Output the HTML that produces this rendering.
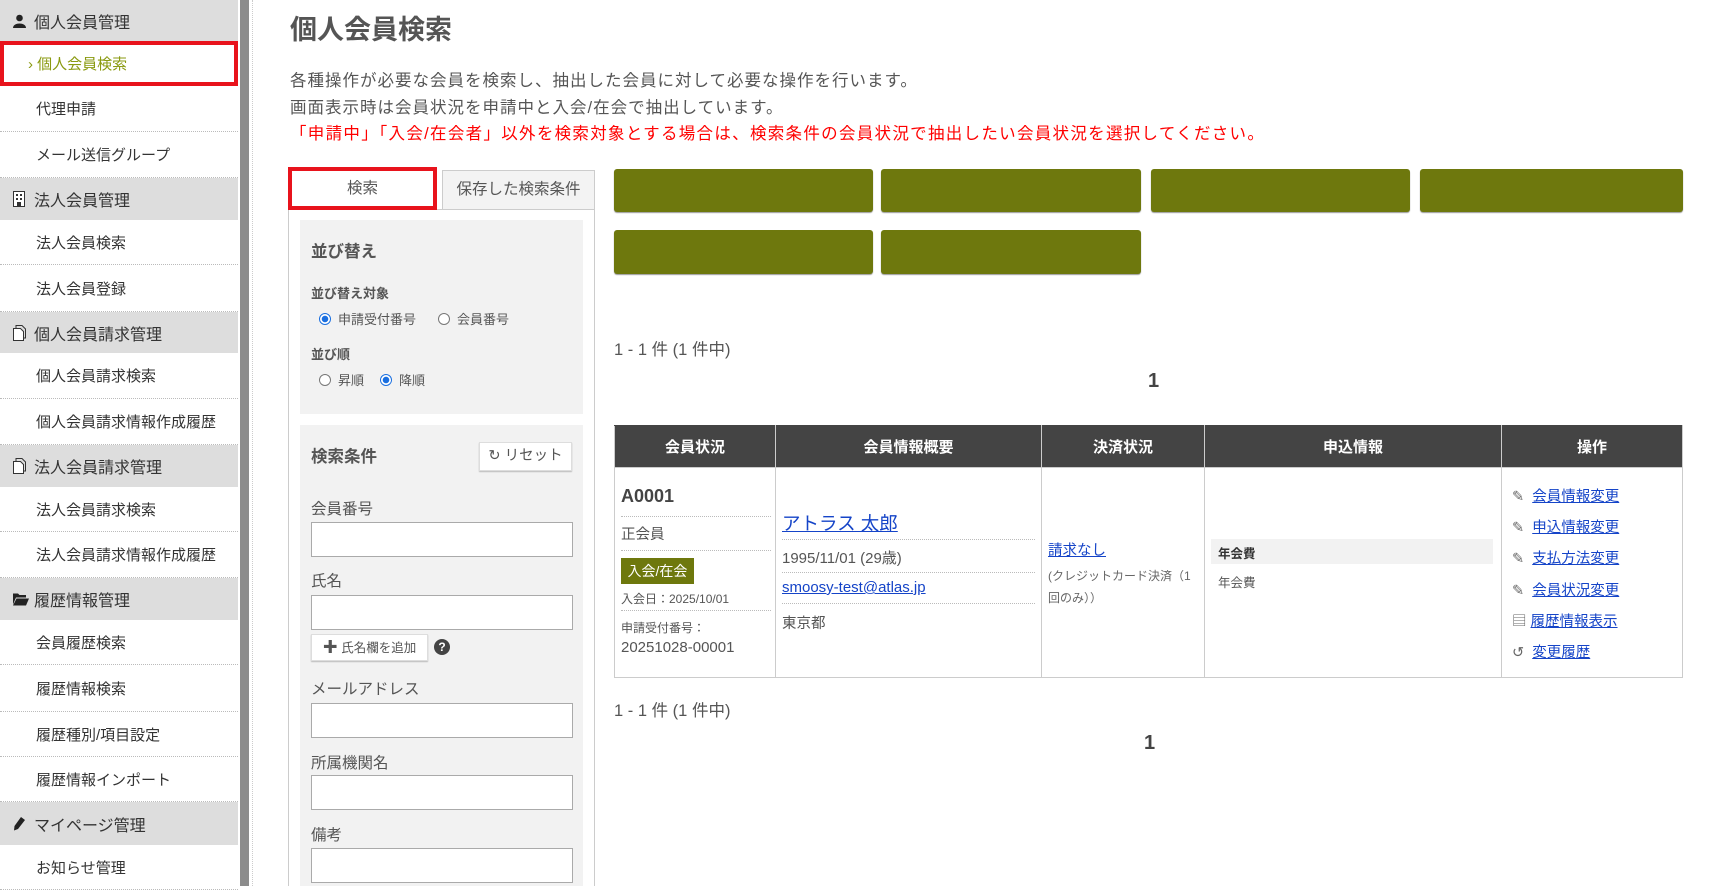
<!DOCTYPE html>
<html><head><meta charset="utf-8">
<style>
*{margin:0;padding:0;box-sizing:border-box}
body{width:1718px;height:886px;overflow:hidden;background:#fff;font-family:"Liberation Sans","Noto Sans CJK JP",sans-serif;color:#444;position:relative}
.a{position:absolute;white-space:nowrap}
.side{position:absolute;left:0;top:0;width:238px;height:886px;background:#fff}
.hd{position:absolute;left:0;width:238px;background:#ddd;font-size:16px;color:#333;padding-left:34px;display:flex;align-items:center}
.hd svg{position:absolute;left:13px;top:50%;transform:translateY(-50%)}
.it{position:absolute;left:0;width:238px;font-size:15px;color:#333;padding-left:36px;display:flex;align-items:center;border-bottom:1px dotted #bbb}
.bar{position:absolute;left:240px;top:0;width:9px;height:886px;background:#8c8c8c}
.dl{position:absolute;left:252px;top:0;height:886px;border-left:1px dotted #ccc}
.btn{position:absolute;background:#6e780d;border-radius:3px;box-shadow:0 1px 1px #999}
.inp{position:absolute;left:311px;width:262px;height:35px;border:1px solid #aaa;background:#fff}
.lbl{position:absolute;left:311px;font-size:15.5px;color:#555}
.rad{display:inline-block;width:12px;height:12px;border:1px solid #777;border-radius:50%;vertical-align:-1px;margin-right:7px;background:#fff}
.rad.on{border:1px solid #1a6fe0;background:radial-gradient(circle,#1a6fe0 3px,#fff 3.5px)}
table{position:absolute;left:614px;top:425px;width:1069px;border-collapse:collapse}
th{background:#444;color:#fff;font-size:15px;height:42px;border:1px solid #ccc;border-top:1px solid #444}
td{border:1px solid #ccc;height:210px}
.lk{color:#1544c8;text-decoration:underline}
.dt{border-bottom:1px dotted #bbb}
</style></head><body>
<div class="side">
<div class="hd" style="top:0;height:41px"><svg width="13" height="14" viewBox="0 0 13 14"><circle cx="6.5" cy="4" r="3.3" fill="#222"/><path d="M0 14 C0 8 13 8 13 14Z" fill="#222"/></svg>個人会員管理</div>
<div class="it" style="top:41px;height:45px;border:4px solid #e8131c;color:#8a9a10;padding-left:24px">› 個人会員検索</div>
<div class="it" style="top:86px;height:46px">代理申請</div>
<div class="it" style="top:132px;height:46px">メール送信グループ</div>
<div class="hd" style="top:178px;height:42px"><svg width="12" height="16" viewBox="0 0 12 16"><rect x="0.5" y="0.5" width="11" height="15" fill="#fff" stroke="#333"/><rect x="3" y="3" width="2" height="2" fill="#333"/><rect x="7" y="3" width="2" height="2" fill="#333"/><rect x="3" y="7" width="2" height="2" fill="#333"/><rect x="7" y="7" width="2" height="2" fill="#333"/><rect x="4" y="11" width="4" height="5" fill="#333"/></svg>法人会員管理</div>
<div class="it" style="top:220px;height:45px">法人会員検索</div>
<div class="it" style="top:265px;height:47px">法人会員登録</div>
<div class="hd" style="top:312px;height:41px"><svg width="13" height="16" viewBox="0 0 13 16"><path d="M0.5 3.5h7l3 3v9h-10z" fill="#fff" stroke="#333"/><path d="M3 3.5V0.5h6l3.5 3.5v9H10.5" fill="none" stroke="#333"/></svg>個人会員請求管理</div>
<div class="it" style="top:353px;height:46px">個人会員請求検索</div>
<div class="it" style="top:399px;height:46px">個人会員請求情報作成履歴</div>
<div class="hd" style="top:445px;height:42px"><svg width="13" height="16" viewBox="0 0 13 16"><path d="M0.5 3.5h7l3 3v9h-10z" fill="#fff" stroke="#333"/><path d="M3 3.5V0.5h6l3.5 3.5v9H10.5" fill="none" stroke="#333"/></svg>法人会員請求管理</div>
<div class="it" style="top:487px;height:45px">法人会員請求検索</div>
<div class="it" style="top:532px;height:46px">法人会員請求情報作成履歴</div>
<div class="hd" style="top:578px;height:42px"><svg width="16" height="13" viewBox="0 0 16 13"><path d="M0 1h5l1.5 1.5H13V5H3L0 12z" fill="#222"/><path d="M3.5 6H16l-3 7H0z" fill="#222"/></svg>履歴情報管理</div>
<div class="it" style="top:620px;height:45px">会員履歴検索</div>
<div class="it" style="top:665px;height:47px">履歴情報検索</div>
<div class="it" style="top:712px;height:45px">履歴種別/項目設定</div>
<div class="it" style="top:757px;height:45px">履歴情報インポート</div>
<div class="hd" style="top:802px;height:43px"><svg width="12" height="14" viewBox="0 0 12 14"><path d="M8 0l4 3-7 9-4 1.5L1.5 9z" fill="#222"/></svg>マイページ管理</div>
<div class="it" style="top:845px;height:45px">お知らせ管理</div>
</div>
<div class="bar"></div><div class="dl"></div>

<div class="a" style="left:290px;top:8px;font-size:27px;font-weight:bold;color:#555">個人会員検索</div>
<div class="a" style="left:290px;top:68px;font-size:16.5px;line-height:26.5px;color:#555;letter-spacing:1px">各種操作が必要な会員を検索し、抽出した会員に対して必要な操作を行います。<br>画面表示時は会員状況を申請中と入会/在会で抽出しています。<br><span style="color:#f00;letter-spacing:1.3px">「申請中」「入会/在会者」以外を検索対象とする場合は、検索条件の会員状況で抽出したい会員状況を選択してください。</span></div>

<div class="a" style="left:288px;top:209px;width:307px;height:677px;border:1px solid #ccc;border-bottom:none"></div>
<div class="a" style="left:442px;top:170px;width:153px;height:40px;border:1px solid #ccc;background:#f3f3f3;font-size:15.5px;color:#555;text-align:center;line-height:38px">保存した検索条件</div>
<div class="a" style="left:288px;top:167px;width:149px;height:43px;border:4px solid #e8131c;background:#fff;font-size:15.5px;color:#555;text-align:center;line-height:35px">検索</div>

<div class="a" style="left:300px;top:220px;width:283px;height:194px;background:#f2f2f2"></div>
<div class="a" style="left:311px;top:238px;font-size:16.5px;font-weight:bold;color:#555">並び替え</div>
<div class="a" style="left:311px;top:283px;font-size:13px;font-weight:bold;color:#555">並び替え対象</div>
<div class="a" style="left:319px;top:309px;font-size:13px;color:#555"><span class="rad on"></span>申請受付番号<span style="display:inline-block;width:22px"></span><span class="rad"></span>会員番号</div>
<div class="a" style="left:311px;top:344px;font-size:13px;font-weight:bold;color:#555">並び順</div>
<div class="a" style="left:319px;top:370px;font-size:13px;color:#555"><span class="rad"></span>昇順<span style="display:inline-block;width:16px"></span><span class="rad on"></span>降順</div>

<div class="a" style="left:300px;top:425px;width:283px;height:461px;background:#f2f2f2"></div>
<div class="a" style="left:311px;top:443px;font-size:16.5px;font-weight:bold;color:#555">検索条件</div>
<div class="a" style="left:479px;top:442px;width:93px;height:29px;background:#fff;border:1px solid #ddd;box-shadow:0 1px 1px #bbb;font-size:14.5px;color:#555;text-align:center;line-height:27px">↻ リセット</div>
<div class="lbl" style="top:497px">会員番号</div><div class="inp" style="top:522px"></div>
<div class="lbl" style="top:569px">氏名</div><div class="inp" style="top:595px"></div>
<div class="a" style="left:311px;top:634px;width:117px;height:27px;background:#fff;border:1px solid #ddd;box-shadow:0 1px 1px #bbb;font-size:12.5px;color:#555;text-align:center;line-height:25px"><b style="font-size:15px">✚</b> 氏名欄を追加</div>
<div class="a" style="left:434px;top:639px;width:16px;height:16px;border-radius:50%;background:#444;color:#fff;font-size:12px;font-weight:bold;text-align:center;line-height:16px">?</div>
<div class="lbl" style="top:677px">メールアドレス</div><div class="inp" style="top:703px"></div>
<div class="lbl" style="top:751px">所属機関名</div><div class="inp" style="top:775px"></div>
<div class="lbl" style="top:823px">備考</div><div class="inp" style="top:848px"></div>

<div class="btn" style="left:614px;top:169px;width:259px;height:43px"></div>
<div class="btn" style="left:881px;top:169px;width:260px;height:43px"></div>
<div class="btn" style="left:1151px;top:169px;width:259px;height:43px"></div>
<div class="btn" style="left:1420px;top:169px;width:263px;height:43px"></div>
<div class="btn" style="left:614px;top:230px;width:259px;height:44px"></div>
<div class="btn" style="left:881px;top:230px;width:260px;height:44px"></div>

<div class="a" style="left:614px;top:336px;font-size:16.5px;color:#555">1 - 1 件 (1 件中)</div>
<div class="a" style="left:1148px;top:370px;font-size:20px;font-weight:bold;color:#444">1</div>

<table>
<tr><th style="width:161px">会員状況</th><th style="width:266px">会員情報概要</th><th style="width:163px">決済状況</th><th style="width:297px">申込情報</th><th>操作</th></tr>
<tr><td></td><td></td><td></td><td></td><td></td></tr>
</table>
<div class="a" style="left:621px;top:486px;font-size:18px;font-weight:bold;color:#444">A0001</div>
<div class="a dt" style="left:621px;top:516px;width:150px"></div>
<div class="a" style="left:621px;top:523px;font-size:14.5px;color:#555">正会員</div>
<div class="a dt" style="left:621px;top:550px;width:150px"></div>
<div class="a" style="left:621px;top:558px;width:73px;height:26px;background:#6e780d;color:#fff;font-size:14px;text-align:center;line-height:26px">入会/在会</div>
<div class="a" style="left:621px;top:590px;font-size:12px;color:#555">入会日：2025/10/01</div>
<div class="a dt" style="left:621px;top:610px;width:150px"></div>
<div class="a" style="left:621px;top:619px;font-size:12px;color:#555">申請受付番号：</div>
<div class="a" style="left:621px;top:639px;font-size:15px;color:#555">20251028-00001</div>
<div class="a lk" style="left:782px;top:510px;font-size:18.5px">アトラス 太郎</div>
<div class="a dt" style="left:782px;top:539px;width:253px"></div>
<div class="a" style="left:782px;top:547px;font-size:15px;color:#555">1995/11/01 (29歳)</div>
<div class="a dt" style="left:782px;top:572px;width:253px"></div>
<div class="a lk" style="left:782px;top:579px;font-size:15px">smoosy-test@atlas.jp</div>
<div class="a dt" style="left:782px;top:603px;width:253px"></div>
<div class="a" style="left:782px;top:612px;font-size:14.5px;color:#555">東京都</div>
<div class="a lk" style="left:1048px;top:539px;font-size:14.5px">請求なし</div>
<div class="a" style="left:1048px;top:565px;font-size:12px;color:#666;line-height:22px">(クレジットカード決済（1<br>回のみ））</div>
<div class="a" style="left:1211px;top:539px;width:282px;height:25px;background:#f2f2f2"></div>
<div class="a" style="left:1218px;top:543px;font-size:12.5px;font-weight:bold;color:#333">年会費</div>
<div class="a" style="left:1218px;top:572px;font-size:12.5px;color:#555">年会費</div>
<div class="a" style="left:1512px;top:482px;font-size:14.5px;line-height:31.2px"><span style="color:#666">✎</span>&nbsp; <span class="lk">会員情報変更</span><br><span style="color:#666">✎</span>&nbsp; <span class="lk">申込情報変更</span><br><span style="color:#666">✎</span>&nbsp; <span class="lk">支払方法変更</span><br><span style="color:#666">✎</span>&nbsp; <span class="lk">会員状況変更</span><br><span style="color:#666">▤</span>&nbsp;<span class="lk">履歴情報表示</span><br><span style="color:#666">↺</span>&nbsp; <span class="lk">変更履歴</span></div>

<div class="a" style="left:614px;top:697px;font-size:16.5px;color:#555">1 - 1 件 (1 件中)</div>
<div class="a" style="left:1144px;top:732px;font-size:20px;font-weight:bold;color:#444">1</div>
</body></html>
